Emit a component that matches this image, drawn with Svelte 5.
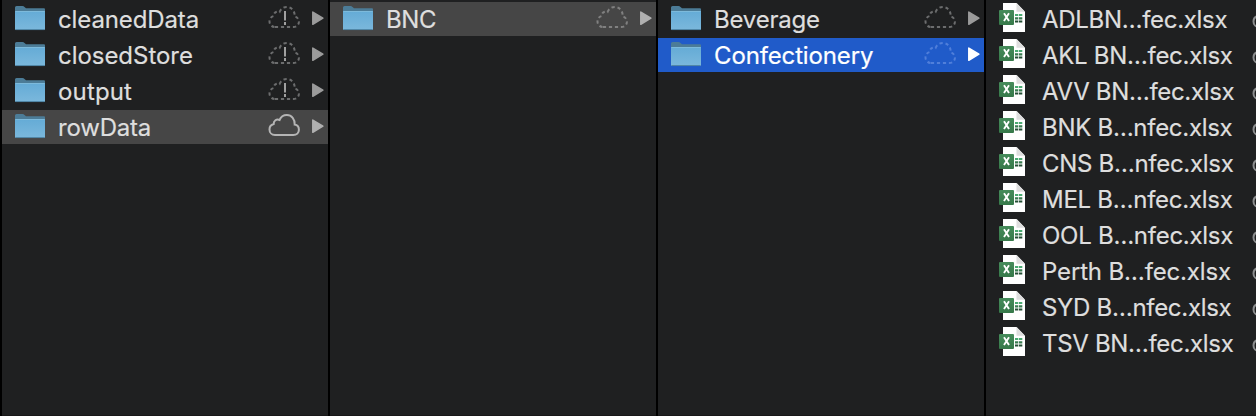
<script>
  const columns = [
    [
      { name: 'cleanedData', cloud: 'alert', ls: -0.12 },
      { name: 'closedStore', cloud: 'alert', ls: -0.04 },
      { name: 'output', cloud: 'alert', ls: 0.15 },
      { name: 'rowData', cloud: 'solid', state: 'selected', ls: -0.2 }
    ],
    [{ name: 'BNC', cloud: 'dashed', state: 'selected', ls: -0.4 }],
    [
      { name: 'Beverage', cloud: 'dashed', ls: -0.2 },
      { name: 'Confectionery', cloud: 'dashed', state: 'active', ls: -0.14 }
    ]
  ];
  const files = [
    { name: 'ADLBN…fec.xlsx', ls: -0.3 },
    { name: 'AKL BN…fec.xlsx', ls: -0.29 },
    { name: 'AVV BN…fec.xlsx', ls: -0.32 },
    { name: 'BNK B…nfec.xlsx', ls: -0.29 },
    { name: 'CNS B…nfec.xlsx', ls: -0.29 },
    { name: 'MEL B…nfec.xlsx', ls: -0.27 },
    { name: 'OOL B…nfec.xlsx', ls: -0.27 },
    { name: 'Perth B…fec.xlsx', ls: -0.15 },
    { name: 'SYD B…nfec.xlsx', ls: -0.3 },
    { name: 'TSV BN…fec.xlsx', ls: -0.32 }
  ];
</script>

{#snippet cloudIcon(kind)}
  <svg class="cloud {kind}" width="34" height="24" viewBox="0 0 34 24">
    <path transform="translate(-.3 0)" d="M7.2 22H25.6C29 22 31.2 19.8 31.2 16.8C31.2 14 29.4 12 27 11.6C27.3 6.2 24 2 19.2 2C15.6 2 13 4 11.9 7C8.8 5.6 5.8 7.8 6 11C3.2 11.8 1.8 13.8 1.8 16.4C1.8 19.6 4 22 7.2 22Z" />
    {#if kind === 'alert'}<path class="mark" d="M17 6V15.5M17 17V20" />{/if}
  </svg>
{/snippet}

<main>
  <svg class="defs" width="0" height="0">
    <defs>
      <linearGradient id="folder" x2="0" y2="1">
        <stop offset="0" stop-color="#64abd6" />
        <stop offset="1" stop-color="#7bb8dc" />
      </linearGradient>
      <linearGradient id="excel" x2="0" y2="1">
        <stop offset="0" stop-color="#468c5b" />
        <stop offset="1" stop-color="#37794a" />
      </linearGradient>
    </defs>
  </svg>
  {#each columns as items}
    <section>
      {#each items as item}
        <div class="row {item.state ?? ''}">
          <svg class="folder" width="30" height="26" viewBox="0 0 30 26">
            <path d="M0 1.5Q0 0 1.5 0H7.5Q8.7 0 9.5 1L11 2.3H29Q30 2.3 30 3.5V10H0Z" fill="#4c7c97" />
            <path d="M0 5H30V23Q30 24 29 24H1Q0 24 0 23Z" fill="url(#folder)" />
            <path d="M.5 5.5H29.5" stroke="#7dbadb" stroke-width="1" />
            <path d="M.5 23.6H29.5" stroke="#477c9a" stroke-width=".9" />
          </svg>
          <span class="name" style:letter-spacing="{item.ls}px">{item.name}</span>
          {@render cloudIcon(item.cloud)}
          <svg class="arrow" width="14" height="16" viewBox="0 0 14 16">
            <path d="M1.8 2.1L11.9 8.2L1.8 14.3Z" />
          </svg>
        </div>
      {/each}
    </section>
  {/each}
  <section class="files">
    {#each files as file}
      <div class="row">
        <svg class="sheet" width="28" height="32" viewBox="0 0 28 32">
          <path d="M4 1H17.5L26 9.7V30H4Z" fill="#fff" />
          <path d="M17.5 1L26 9.7H17.5Z" fill="#dedede" />
          <path d="M16 13h3.3M20 13h3.3" stroke="#4bab72" stroke-width="2.2" />
          <path d="M16 16.4h3.3M20 16.4h3.3" stroke="#397c50" stroke-width="2.2" />
          <path d="M16 19.5h3.3M20 19.5h3.3" stroke="#244f35" stroke-width="2" />
          <rect y="8" width="15" height="15" rx="1" fill="url(#excel)" />
          <path d="M5 11.3L10 19M10 11.3L5 19" stroke="#fff" stroke-width="1.9" />
        </svg>
        <span class="name" style:letter-spacing="{file.ls}px">{file.name}</span>
        {@render cloudIcon('edge')}
      </div>
    {/each}
  </section>
</main>

<style>
  :global(body) { background: #1f2021; overflow: hidden; }
  main {
    display: grid;
    grid-template-columns: 326px 326px 326px 270px;
    gap: 2px;
    box-sizing: border-box;
    width: 1256px;
    height: 416px;
    padding-left: 2px;
    background: #000;
    overflow: hidden;
    font-family: Inter, sans-serif;
    font-size: 24px;
    font-weight: 400;
    color: #dedede;
  }
  .defs { position: absolute; }
  section {
    display: flex;
    flex-direction: column;
    gap: 2px;
    padding-top: 2px;
    background: #1f2021;
    border-bottom: 1px solid #191819;
    overflow: hidden;
  }
  .row {
    display: flex;
    height: 34px;
    box-sizing: border-box;
    padding-left: 13px;
    flex-shrink: 0;
    color: #dedede;
    -webkit-text-stroke: 0.2px currentColor;
  }
  .selected { background: #464646; }
  .active { background: #205bc9; color: #fff; }
  .folder { margin-top: 4px; flex: none; }
  .name {
    width: 210px;
    margin-left: 13px;
    line-height: 36px;
    white-space: nowrap;
    flex: none;
  }
  .cloud {
    flex: none;
    margin-top: 3px;
    margin-left: -.5px;
    margin-right: .5px;
    fill: none;
    stroke: #6c6d6e;
    stroke-width: 2;
    stroke-dasharray: 3.2 2.8;
  }
  .cloud.solid { stroke: #b5b5b5; stroke-dasharray: none; }
  .cloud.edge { stroke: #8c8d8e; stroke-dasharray: none; margin-left: -.5px; }
  .cloud .mark { stroke: #a0a0a0; stroke-width: 2; stroke-dasharray: none; }
  .selected .cloud.dashed { stroke: #808080; }
  .active .cloud { stroke: #507fda; }
  .arrow {
    flex: none;
    margin: 8px 0 0 9px;
    fill: #9b9b9b;
    stroke: #9b9b9b;
    stroke-width: 1.5;
    stroke-linejoin: round;
  }
  .selected .arrow { fill: #b0b0b0; stroke: #b0b0b0; }
  .active .arrow { fill: #fff; stroke: #fff; }
  .sheet { flex: none; }
  .files .name { margin-left: 15px; }
</style>
